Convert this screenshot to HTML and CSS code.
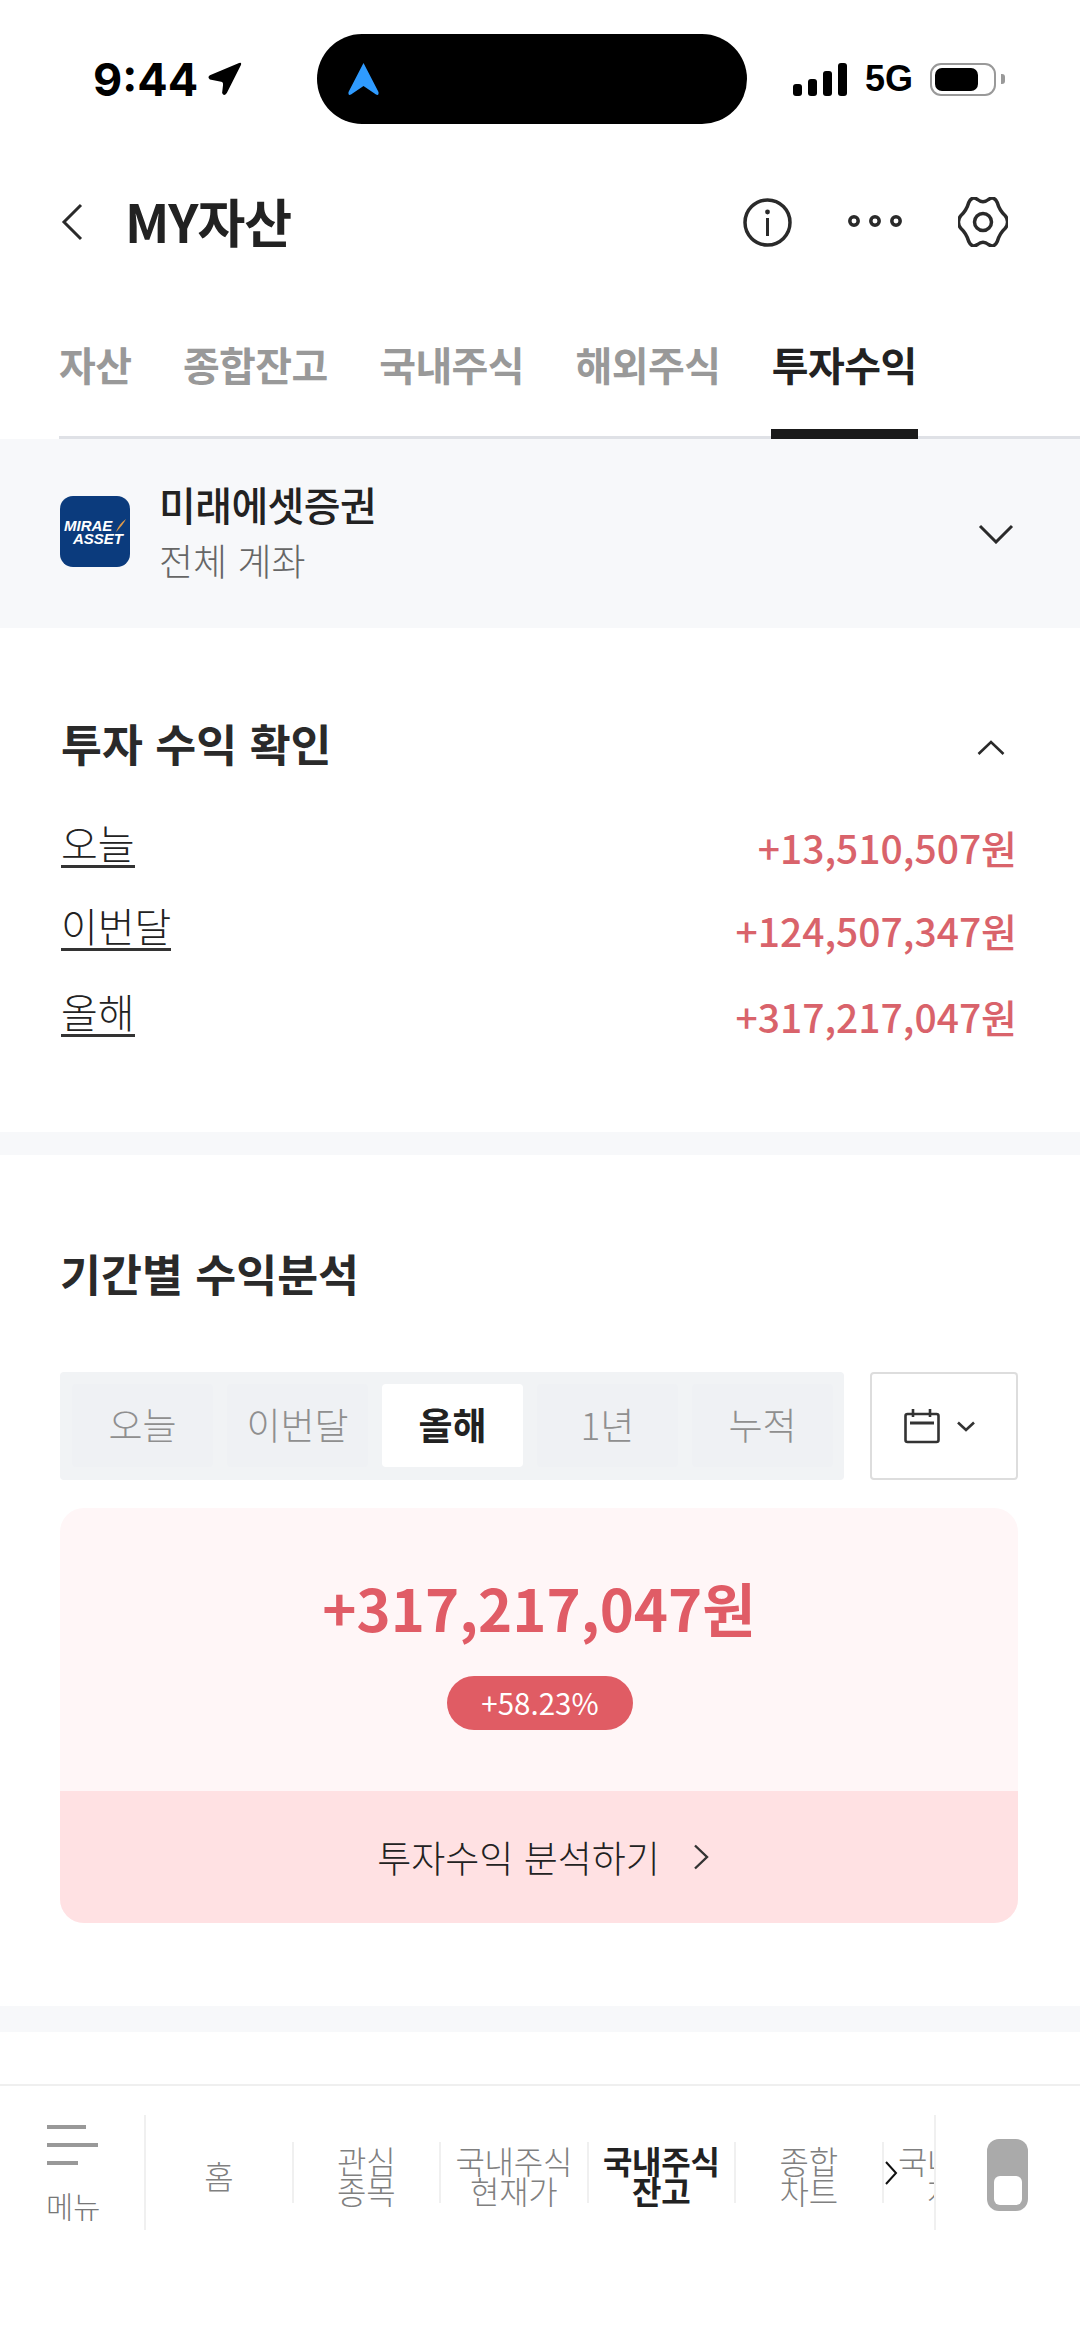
FILE: index.html
```html
<!DOCTYPE html>
<html lang="ko">
<head>
  <meta charset="UTF-8" />
  <meta name="viewport" content="width=device-width, initial-scale=1.0"/>
  <title>MY자산</title>
  <link rel="stylesheet" href="styles.css">
</head>
<body>

  <div class="status">
    <div class="status-time">
      <span>9:44</span>
      <svg class="loc" width="36" height="36" viewBox="0 0 36 36"><path d="M33 1 L2 14 Q-1 16 2 18.5 L14 21 Q16 21 16 24 L15 33 Q17 37 20 33 L35 3 Q36 0 33 1Z" fill="#000"/></svg>
    </div>
    <div class="island">
      <svg width="31" height="33" viewBox="0 0 31 33"><path d="M15.5 0 L30.5 29 Q31 33 28 31.5 L15.5 23 L3 31.5 Q0 33 .5 29Z" fill="#2f9bff"/></svg>
    </div>
    <div class="status-right">
      <div class="signal"><i class="b1"></i><i class="b2"></i><i class="b3"></i><i class="b4"></i></div>
      <span class="net">5G</span>
      <div class="battery"><i></i></div>
      <div class="battery-cap"></div>
    </div>
  </div>

  <div class="topbar">
    <svg width="22" height="38" viewBox="0 0 22 38"><path d="M20 2 L3 19 L20 36" fill="none" stroke="#2a2a2a" stroke-width="3"/></svg>
    <h1 class="title">MY자산</h1>
    <div class="actions">
      <svg width="49" height="49" viewBox="0 0 49 49"><circle cx="24.5" cy="24.5" r="22.5" fill="none" stroke="#2a2a2a" stroke-width="3.5"/><circle cx="24.5" cy="14" r="2.4" fill="#2a2a2a"/><path d="M24.5 20 V38" stroke="#2a2a2a" stroke-width="3"/></svg>
      <svg class="dots" width="54" height="12" viewBox="0 0 54 12"><g fill="none" stroke="#2a2a2a" stroke-width="3.5"><circle cx="6" cy="6" r="4.2"/><circle cx="27" cy="6" r="4.2"/><circle cx="48" cy="6" r="4.2"/></g></svg>
      <svg width="50" height="50" viewBox="0 0 50 50"><path d="M19.5 2.5 Q25 7 30.5 2.5 Q36 -1.5 39.25 5.5 Q41.5 13.5 47.25 18.75 Q52 25 47.25 31.25 Q41.5 36.5 39.25 44.5 Q36 51.5 30.5 47.5 Q25 43 19.5 47.5 Q14 51.5 10.75 44.5 Q8.5 36.5 2.75 31.25 Q-2 25 2.75 18.75 Q8.5 13.5 10.75 5.5 Q14 -1.5 19.5 2.5Z" fill="none" stroke="#2a2a2a" stroke-width="3.5"/><circle cx="25" cy="25" r="8.5" fill="none" stroke="#2a2a2a" stroke-width="3.5"/></svg>
    </div>
  </div>

  <div class="tabs">
    <div class="tab">자산</div>
    <div class="tab">종합잔고</div>
    <div class="tab">국내주식</div>
    <div class="tab">해외주식</div>
    <div class="tab active">투자수익</div>
  </div>

  <div class="account">
    <div class="logo">
      <span class="logo-top">MIRAE</span>
      <span class="logo-bottom">ASSET</span>
      <svg class="logo-mark" width="10" height="13" viewBox="0 0 10 13"><path d="M10 0 Q7 6 0 13 Q3 5 10 0Z" fill="#e09a4a"/></svg>
    </div>
    <div class="account-text">
      <div class="account-name">미래에셋증권</div>
      <div class="account-sub">전체 계좌</div>
    </div>
    <svg class="account-arrow" width="36" height="20" viewBox="0 0 36 20"><path d="M2 2 L18 18 L34 2" fill="none" stroke="#2a2a2a" stroke-width="3"/></svg>
  </div>

  <div class="section check">
    <div class="section-head">
      <h2>투자 수익 확인</h2>
      <svg class="head-arrow" width="28" height="15" viewBox="0 0 28 15"><path d="M1.5 14 L14 2 L26.5 14" fill="none" stroke="#2a2a2a" stroke-width="2.6"/></svg>
    </div>
    <div class="rows">
      <div class="row"><span class="row-label">오늘</span><span class="row-value">+13,510,507원</span></div>
      <div class="row"><span class="row-label">이번달</span><span class="row-value">+124,507,347원</span></div>
      <div class="row"><span class="row-label">올해</span><span class="row-value">+317,217,047원</span></div>
    </div>
  </div>

  <div class="band"></div>

  <div class="section period">
    <h2>기간별 수익분석</h2>
    <div class="controls">
      <div class="seg">
        <div class="seg-item">오늘</div>
        <div class="seg-item">이번달</div>
        <div class="seg-item on">올해</div>
        <div class="seg-item">1년</div>
        <div class="seg-item">누적</div>
      </div>
      <div class="cal-btn">
        <svg width="36" height="35" viewBox="0 0 36 35"><g fill="none" stroke="#333" stroke-width="2.6"><rect x="1.5" y="5" width="33" height="28" rx="2"/><path d="M9 0 V8 M26 0 V8"/><path d="M6 14 H30" stroke-width="3"/></g></svg>
        <svg width="18" height="11" viewBox="0 0 18 11"><path d="M1 1.5 L9 9 L17 1.5" fill="none" stroke="#333" stroke-width="2.6"/></svg>
      </div>
    </div>
    <div class="card">
      <div class="card-top">
        <div class="amount">+317,217,047원</div>
        <div class="rate">+58.23%</div>
      </div>
      <div class="card-link">
        <span>투자수익 분석하기</span>
        <svg width="16" height="26" viewBox="0 0 16 26"><path d="M2 1.5 L14 13 L2 24.5" fill="none" stroke="#333" stroke-width="2.4"/></svg>
      </div>
    </div>
  </div>

  <div class="band low"></div>
  <div class="spacer"></div>

  <div class="nav">
    <div class="nav-menu">
      <i class="l1"></i><i class="l2"></i><i class="l3"></i>
      <span>메뉴</span>
    </div>
    <div class="nav-items">
      <div class="nav-item">홈</div>
      <div class="nav-item">관심<br>종목</div>
      <div class="nav-item">국내주식<br>현재가</div>
      <div class="nav-item on">국내주식<br>잔고</div>
      <div class="nav-item">종합<br>차트</div>
      <div class="nav-item">국내주식<br>차트</div>
      <svg class="nav-more" width="14" height="24" viewBox="0 0 14 24"><path d="M2 1 L12 12 L2 23" fill="none" stroke="#111" stroke-width="2"/></svg>
    </div>
    <div class="nav-side">
      <div class="switch"><i></i></div>
    </div>
  </div>

</body>
</html>
```

FILE: styles.css
```css
* {
  box-sizing: border-box;
}

body {
  margin: 0;
  width: 1080px;
  height: 2346px;
  overflow: hidden;
  background: #fff;
  color: #2a2a2a;
  font-family: "Noto Sans CJK KR", "Noto Sans", sans-serif;
}

h1, h2 {
  margin: 0;
}

/* status bar */
.status {
  display: flex;
  align-items: center;
  height: 158px;
  padding-left: 93px;
}

.status-time {
  display: flex;
  align-items: center;
  gap: 10px;
  width: 149px;
  font-family: Inter, sans-serif;
  font-size: 45px;
  font-weight: 700;
  color: #000;
}

.island {
  display: flex;
  align-items: center;
  width: 430px;
  height: 90px;
  margin-left: 75px;
  padding-left: 31px;
  background: #000;
  border-radius: 45px;
}

.status-right {
  display: flex;
  align-items: center;
  margin-left: 46px;
}

.signal {
  display: flex;
  align-items: flex-end;
  gap: 6px;
  height: 33px;
}

.signal i {
  width: 9px;
  background: #000;
  border-radius: 3px;
}

.b1 { height: 12px; }
.b2 { height: 17px; }
.b3 { height: 25px; }
.b4 { height: 33px; }

.net {
  margin-left: 18px;
  font-family: "Liberation Sans", sans-serif;
  font-size: 36px;
  font-weight: 700;
  color: #000;
}

.battery {
  width: 66px;
  height: 33px;
  margin-left: 17px;
  padding: 3px;
  border: 2.5px solid #999;
  border-radius: 11px;
}

.battery i {
  display: block;
  width: 43px;
  height: 23px;
  background: #000;
  border-radius: 7px;
}

.battery-cap {
  width: 4px;
  height: 10px;
  margin-left: 5px;
  background: #999;
  border-radius: 0 3px 3px 0;
}

/* header */
.topbar {
  display: flex;
  align-items: center;
  height: 128px;
  padding: 0 72px 0 61px;
}

.title {
  margin: -4px 0 0 42px;
  font-size: 52px;
  font-weight: 700;
  letter-spacing: -1px;
  color: #222;
}

.actions {
  display: flex;
  align-items: center;
  gap: 56px;
  margin-left: auto;
}

.dots {
  margin-top: -2px;
}

/* tabs */
.tabs {
  display: flex;
  gap: 51.5px;
  height: 153px;
  margin-left: 59px;
  border-bottom: 3px solid #dfe1e6;
}

.tab {
  flex: none;
  height: 153px;
  padding-top: 49px;
  border-bottom: 10px solid transparent;
  font-size: 40px;
  line-height: 58px;
  font-weight: 700;
  letter-spacing: -0.6px;
  color: #999;
}

.tab.active {
  width: 147px;
  margin-left: -1px;
  padding-left: 1px;
  color: #222;
  border-bottom-color: #1a1a1a;
}

/* account */
.account {
  display: flex;
  align-items: center;
  height: 189px;
  padding: 0 66px 0 60px;
  background: #f7f8fa;
}

.logo {
  position: relative;
  display: flex;
  flex-direction: column;
  justify-content: center;
  width: 70px;
  height: 71px;
  margin-bottom: 4px;
  background: #0b3b7d;
  border-radius: 13px;
  font-family: "Liberation Sans", sans-serif;
  font-size: 15px;
  line-height: 13px;
  font-weight: 700;
  font-style: italic;
  color: #fff;
}

.logo-top {
  margin-left: 4px;
}

.logo-bottom {
  margin-left: 13px;
}

.logo-mark {
  position: absolute;
  top: 23px;
  left: 56px;
}

.account-text {
  margin: -3px 0 0 29px;
}

.account-name {
  font-size: 40px;
  line-height: 56px;
  font-weight: 500;
  letter-spacing: -0.6px;
  color: #222;
}

.account-sub {
  font-size: 37px;
  line-height: 56px;
  font-weight: 300;
  color: #666;
}

.account-arrow {
  margin-left: auto;
}

/* sections */
.section h2 {
  font-size: 44.5px;
  line-height: 54px;
  font-weight: 700;
  color: #2a2a2a;
}

.check {
  height: 504px;
  padding: 88px 63px 0 61px;
}

.section-head {
  display: flex;
  align-items: center;
  justify-content: space-between;
  padding-right: 12px;
}

.head-arrow {
  margin-top: 8px;
}

.rows {
  display: flex;
  flex-direction: column;
  gap: 32px;
  margin-top: 49px;
}

.row {
  display: flex;
  align-items: flex-start;
  justify-content: space-between;
}

.row:last-child {
  margin-top: 3px;
}

.row-label {
  border-bottom: 3px solid #333;
  font-size: 40px;
  line-height: 46px;
  font-weight: 300;
  color: #222;
}

.row-value {
  margin-top: 5px;
  font-size: 39px;
  line-height: 46px;
  font-weight: 500;
  color: #d9636b;
}

.band {
  height: 23px;
  background: #f7f8fa;
}

.band.low {
  height: 26px;
}

.period {
  height: 851px;
  padding: 91px 62px 0 60px;
}

.controls {
  display: flex;
  gap: 26px;
  margin-top: 72px;
}

.seg {
  display: flex;
  gap: 14px;
  width: 784px;
  height: 108px;
  padding: 12px 11px 13px 12px;
  background: #f1f3f5;
  border-radius: 4px;
}

.seg-item {
  display: flex;
  flex: 1;
  align-items: center;
  justify-content: center;
  padding-bottom: 3px;
  background: #eff1f4;
  border-radius: 4px;
  font-size: 37px;
  font-weight: 300;
  color: #8f8f8f;
}

.seg-item.on {
  background: #fff;
  font-weight: 700;
  color: #222;
}

.cal-btn {
  display: flex;
  align-items: center;
  gap: 17px;
  width: 148px;
  height: 108px;
  padding-left: 32px;
  border: 2px solid #ddd;
  border-radius: 4px;
}

.card {
  height: 415px;
  margin-top: 28px;
  overflow: hidden;
  background: #fff6f7;
  border-radius: 24px;
}

.card-top {
  display: flex;
  flex-direction: column;
  align-items: center;
  height: 283px;
  padding-top: 59px;
}

.amount {
  font-size: 58px;
  line-height: 80px;
  font-weight: 700;
  color: #e05c66;
}

.rate {
  width: 186px;
  height: 54px;
  margin: 29px 0 0 2px;
  background: #e05c64;
  border-radius: 27px;
  font-size: 29.5px;
  line-height: 52px;
  text-align: center;
  color: #fff;
}

.card-link {
  display: flex;
  align-items: center;
  justify-content: center;
  gap: 33px;
  height: 132px;
  padding-left: 8px;
  background: #ffe1e3;
  font-size: 37px;
  font-weight: 300;
  color: #222;
}

.spacer {
  height: 52px;
}

/* bottom nav */
.nav {
  display: flex;
  align-items: flex-start;
  padding-top: 29px;
  border-top: 2px solid #efefef;
}

.nav-menu {
  display: flex;
  flex-direction: column;
  flex: none;
  width: 146px;
  height: 115px;
  padding: 10px 0 0 47px;
  border-right: 2px solid #f0f0f0;
}

.nav-menu i {
  display: block;
  height: 4px;
  margin-bottom: 14px;
  background: #999;
}

.nav-menu .l1 { width: 39px; }
.nav-menu .l2 { width: 51px; }
.nav-menu .l3 { width: 31px; }

.nav-menu span {
  margin: 9px 0 0 -1px;
  font-size: 29.5px;
  line-height: 34px;
  font-weight: 300;
  color: #777;
}

.nav-items {
  position: relative;
  display: flex;
  flex: none;
  align-items: center;
  width: 788px;
  height: 115px;
  overflow: hidden;
}

.nav-item {
  display: flex;
  flex: none;
  align-items: center;
  justify-content: center;
  width: 147.5px;
  height: 61px;
  padding-top: 5px;
  border-right: 2px solid #f0f0f0;
  font-size: 32px;
  line-height: 30px;
  font-weight: 300;
  letter-spacing: -0.3px;
  text-align: center;
  color: #808080;
}

.nav-item.on {
  font-weight: 700;
  color: #222;
}

.nav-more {
  position: absolute;
  top: 46px;
  left: 738px;
}

.nav-side {
  flex: 1;
  height: 115px;
  padding: 24px 0 0 51px;
  border-left: 2px solid #f0f0f0;
}

.switch {
  display: flex;
  align-items: flex-end;
  justify-content: center;
  width: 41px;
  height: 72px;
  padding-bottom: 6px;
  background: #aaa;
  border-radius: 12px;
}

.switch i {
  display: block;
  width: 28px;
  height: 29px;
  background: #fff;
  border-radius: 6px;
}
```
